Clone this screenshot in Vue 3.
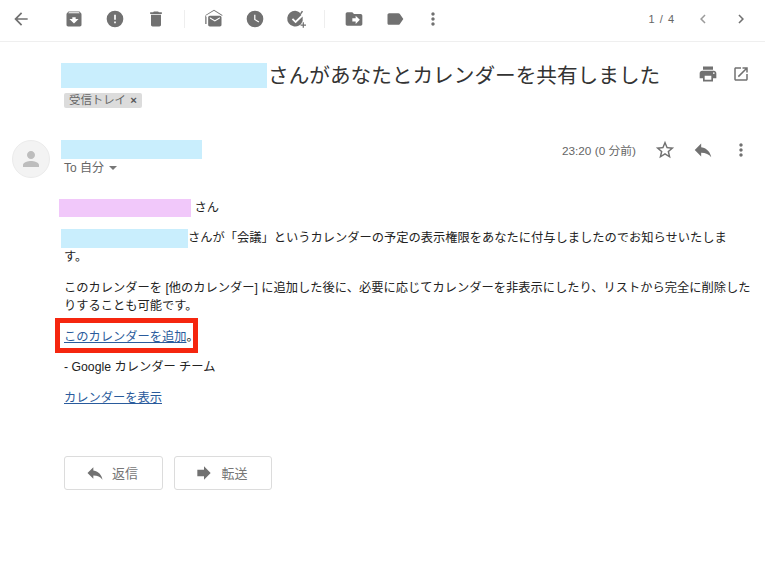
<script setup>
const groups = [
  [
    { name: 'archive', d: 'M20.54 5.23l-1.39-1.68C18.88 3.21 18.47 3 18 3H6c-.47 0-.88.21-1.16.55L3.46 5.23C3.17 5.57 3 6.02 3 6.5V19c0 1.1.9 2 2 2h14c1.1 0 2-.9 2-2V6.5c0-.48-.17-.93-.46-1.27zM12 17.5L6.5 12H10v-2h4v2h3.5L12 17.5zM5.12 5l.81-1h12l.94 1H5.12z' },
    { name: 'spam', d: 'M12 2a10 10 0 1 0 0 20 10 10 0 0 0 0-20zm1 15h-2v-2h2v2zm0-4h-2V7h2v6z' },
    { name: 'delete', d: 'M6 19c0 1.1.9 2 2 2h8c1.1 0 2-.9 2-2V7H6v12zM19 4h-3.5l-1-1h-5l-1 1H5v2h14V4z' }
  ],
  [
    { name: 'mail', d: 'M19 8H7c-1.1 0-2 .9-2 2v9c0 1.1.9 2 2 2h12c1.1 0 2-.9 2-2v-9c0-1.1-.9-2-2-2zm0 3.5l-6 3.6-6-3.6V10l6 3.6 6-3.6v1.5zM3 9.5V18H1.500V8.500L12 2l10 6.500V7.300L12 1 1.500 7.500 3 9.500z' },
    { name: 'snooze', d: 'M12 2a10 10 0 1 0 0 20 10 10 0 0 0 0-20zm4.200 14.200L11 13V7h1.500v5.200l4.500 2.700-.8 1.300z' },
    { name: 'task', d: 'M11 2a9.500 9.500 0 1 0 9 12.500V9l-8.500 8L7 12.500 8.500 11l3 3 7-6.800A9.500 9.500 0 0 0 11 2zM19 2l1.500 1-2 3-1.500-1zM20 16h1.500v2.500H24V20h-2.500v2.500H20V20h-2.500v-1.500H20z' }
  ],
  [
    { name: 'move', d: 'M20 6h-8l-2-2H4c-1.100 0-2 .9-2 2v12c0 1.100.9 2 2 2h16c1.100 0 2-.9 2-2V8c0-1.100-.9-2-2-2zm-6 12v-3h-4v-4h4V8l5 5-5 5z' },
    { name: 'label', d: 'M17.630 5.840C17.270 5.330 16.670 5 16 5L5 5.010C3.900 5.010 3 5.900 3 7v10c0 1.100.9 1.990 2 1.990L16 19c.67 0 1.270-.33 1.630-.84L22 12l-4.370-6.160z' },
    { name: 'more', d: 'M12 8c1.100 0 2-.9 2-2s-.9-2-2-2-2 .9-2 2 .9 2 2 2zm0 2c-1.100 0-2 .9-2 2s.9 2 2 2 2-.9 2-2-.9-2-2-2zm0 6c-1.100 0-2 .9-2 2s.9 2 2 2 2-.9 2-2-.9-2-2-2z' }
  ]
]

const replyPath = 'M10 9V5l-7 7 7 7v-4.100c5 0 8.500 1.600 11 5.100-1-5-4-10-11-11z'
const forwardPath = 'M12 8V4l8 8-8 8v-4H4V8z'
const morePath = 'M12 8c1.100 0 2-.9 2-2s-.9-2-2-2-2 .9-2 2 .9 2 2 2zm0 2c-1.100 0-2 .9-2 2s.9 2 2 2 2-.9 2-2-.9-2-2-2zm0 6c-1.100 0-2 .9-2 2s.9 2 2 2 2-.9 2-2-.9-2-2-2z'
</script>

<template>
  <div class="page">
    <header class="toolbar">
      <button class="icon-btn back">
        <svg viewBox="0 0 24 24" width="20" height="20"><path d="M20 11H7.830l5.590-5.590L12 4l-8 8 8 8 1.410-1.410L7.830 13H20v-2z" /></svg>
      </button>
      <div v-for="(group, i) in groups" :key="i" class="tool-group">
        <button v-for="icon in group" :key="icon.name" class="icon-btn">
          <svg viewBox="0 0 24 24" width="20" height="20"><path :d="icon.d" /></svg>
        </button>
      </div>
      <span class="pager">1 / 4</span>
      <button class="icon-btn pager-btn light">
        <svg viewBox="0 0 24 24" width="18" height="18"><path d="M15.410 7.410L14 6l-6 6 6 6 1.410-1.410L10.830 12z" /></svg>
      </button>
      <button class="icon-btn pager-btn">
        <svg viewBox="0 0 24 24" width="18" height="18"><path d="M10 6L8.590 7.410 13.170 12l-4.580 4.590L10 18l6-6z" /></svg>
      </button>
    </header>

    <section class="subject">
      <div class="subject-main">
        <h1><span class="mask subject-mask"></span>さんがあなたとカレンダーを共有しました</h1>
        <span class="chip">受信トレイ <b>×</b></span>
      </div>
      <div class="subject-actions">
        <svg viewBox="0 0 24 24" width="20" height="20"><path d="M19 8H5c-1.660 0-3 1.340-3 3v6h4v4h12v-4h4v-6c0-1.660-1.340-3-3-3zm-3 11H8v-5h8v5zm3-7c-.55 0-1-.45-1-1s.45-1 1-1 1 .45 1 1-.45 1-1 1zm-1-9H6v4h12V3z" /></svg>
        <svg viewBox="0 0 24 24" width="18" height="18"><path d="M19 19H5V5h7V3H5c-1.110 0-2 .9-2 2v14c0 1.100.89 2 2 2h14c1.100 0 2-.9 2-2v-7h-2v7zM14 3v2h3.590l-9.830 9.830 1.410 1.410L19 6.410V10h2V3h-7z" /></svg>
      </div>
    </section>

    <section class="message-head">
      <div class="avatar">
        <svg viewBox="0 0 24 24" width="24" height="24"><path d="M12 12c2.210 0 4-1.790 4-4s-1.790-4-4-4-4 1.790-4 4 1.790 4 4 4zm0 2c-2.670 0-8 1.340-8 4v2h16v-2c0-2.660-5.330-4-8-4z" /></svg>
      </div>
      <div class="sender">
        <span class="mask sender-mask"></span>
        <div class="to">To 自分 <i class="caret"></i></div>
      </div>
      <div class="meta">
        <span class="time">23:20 (0 分前)</span>
        <svg class="meta-icon" viewBox="0 0 24 24" width="22" height="22"><path d="M22 9.240l-7.190-.62L12 2 9.190 8.630 2 9.240l5.460 4.730L5.820 21 12 17.270 18.180 21l-1.630-7.030L22 9.240zM12 15.400l-3.760 2.270 1-4.280-3.320-2.880 4.380-.38L12 6.100l1.710 4.040 4.380.38-3.320 2.880 1 4.280L12 15.400z" /></svg>
        <svg class="meta-icon" viewBox="0 0 24 24" width="22" height="22"><path :d="replyPath" /></svg>
        <svg class="meta-icon" viewBox="0 0 24 24" width="20" height="20"><path :d="morePath" /></svg>
      </div>
    </section>

    <article class="body">
      <p class="greeting"><span class="mask pink"></span> さん</p>
      <p><span class="mask body-mask"></span>さんが「会議」というカレンダーの予定の表示権限をあなたに付与しましたのでお知らせいたしま<br>す。</p>
      <p>このカレンダーを [他のカレンダー] に追加した後に、必要に応じてカレンダーを非表示にしたり、リストから完全に削除したりすることも可能です。</p>
      <p><span class="marked"><a href="#">このカレンダーを追加</a>。<i class="red-frame"></i></span></p>
      <p>- Google カレンダー チーム</p>
      <p><a href="#">カレンダーを表示</a></p>
    </article>

    <div class="actions">
      <button class="action">
        <svg viewBox="0 0 24 24" width="20" height="20"><path :d="replyPath" /></svg>
        返信
      </button>
      <button class="action">
        <svg viewBox="0 0 24 24" width="20" height="20"><path :d="forwardPath" /></svg>
        転送
      </button>
    </div>
  </div>
</template>

<style scoped>
.page {
  width: 768px;
  height: 576px;
  overflow: hidden;
  background: #fff;
  color: #222;
  font-family: "Liberation Sans", "Noto Sans CJK JP", sans-serif;
}
svg {
  fill: #717171;
  display: block;
}
button {
  font-family: inherit;
  background: none;
  border: none;
  padding: 0;
}
.mask {
  display: inline-block;
  vertical-align: top;
  background: #c9eefd;
}

.toolbar {
  width: 765px;
  height: 42px;
  border-bottom: 1px solid #efefef;
  display: flex;
  align-items: center;
  padding-bottom: 4px;
  padding-right: 5px;
  box-sizing: border-box;
}
.icon-btn {
  width: 41px;
  height: 30px;
  display: flex;
  align-items: center;
  justify-content: center;
  flex: none;
}
.back {
  width: 42px;
  margin-right: 11px;
}
.tool-group {
  display: flex;
  padding-right: 8px;
  margin-right: 8px;
  border-right: 1px solid #eee;
  height: 18px;
  align-items: center;
}
.tool-group:nth-of-type(3) {
  border-right: none;
}
.tool-group:nth-of-type(3) .icon-btn:last-child {
  margin-left: -3px;
}
.pager {
  margin-left: auto;
  margin-right: 9px;
  font-size: 11px;
  letter-spacing: 1px;
  color: #666;
}
.pager-btn {
  width: 38px;
}
.light svg {
  fill: #9b9b9b;
}

.subject {
  display: flex;
  justify-content: space-between;
  padding: 21px 18px 0 61px;
  height: 83px;
  box-sizing: border-box;
}
h1 {
  margin: 0;
  font-size: 20.65px;
  font-weight: 400;
  line-height: 25px;
  color: #333;
  display: flex;
}
.subject-mask {
  width: 206px;
  height: 25px;
  margin-right: 1px;
}
.chip {
  display: inline-block;
  margin: 5px 0 0 3px;
  padding: 0 5px;
  height: 15px;
  line-height: 15px;
  border-radius: 2px;
  background: #dcdcdc;
  color: #666;
  font-size: 11.4px;
}
.chip b {
  margin-left: 1px;
  color: #555;
}
.subject-actions {
  display: flex;
  gap: 14px;
  align-items: center;
  height: 22px;
}

.message-head {
  display: flex;
  padding: 15px 15px 0 12px;
  height: 73.5px;
  box-sizing: border-box;
}
.avatar {
  width: 38px;
  height: 38px;
  border-radius: 50%;
  background: #f3f3f3;
  border: 1px solid #ebebeb;
  box-sizing: border-box;
  display: flex;
  align-items: center;
  justify-content: center;
  margin-right: 11px;
}
.avatar svg {
  fill: #bdbdbd;
}
.sender {
  flex: 1;
}
.sender-mask {
  width: 141px;
  height: 19px;
  display: block;
}
.to {
  margin: 1px 0 0 3px;
  font-size: 12px;
  line-height: 16px;
  color: #666;
  display: flex;
  align-items: center;
  gap: 5px;
}
.caret {
  width: 0;
  height: 0;
  border: 4px solid transparent;
  border-top-color: #777;
  border-bottom: none;
}
.meta {
  display: flex;
  align-items: center;
  height: 19px;
}
.time {
  font-size: 11.8px;
  color: #666;
  margin-right: 18px;
}
.meta-icon {
  margin-right: 16px;
}
.meta-icon:last-child {
  margin-right: 2px;
  margin-left: 1px;
}

.body {
  padding: 0 17px 0 64px;
  font-size: 12.25px;
  line-height: 18.5px;
  color: #222;
}
.body p {
  margin: 0 0 12px;
}
.body a {
  color: #2a5b9c;
  text-decoration: underline;
}
.greeting .pink {
  width: 132px;
  height: 18px;
  margin-left: -5px;
  background: #f1c8fa;
}
.body-mask {
  width: 127px;
  height: 19px;
  margin-left: -3px;
}
.marked {
  position: relative;
  display: inline-block;
}
.red-frame {
  position: absolute;
  left: -9px;
  right: 1px;
  top: -10px;
  bottom: -7px;
  border: 5px solid #f5260f;
}

.actions {
  display: flex;
  gap: 11px;
  padding: 36.5px 0 0 64px;
}
.action {
  width: 99px;
  height: 34px;
  display: flex;
  align-items: center;
  justify-content: center;
  gap: 7px;
  padding-right: 4px;
  border: 1px solid #dcdcdc;
  border-radius: 3px;
  color: #777;
  font-size: 13px;
}
.action + .action {
  width: 98px;
}
</style>
